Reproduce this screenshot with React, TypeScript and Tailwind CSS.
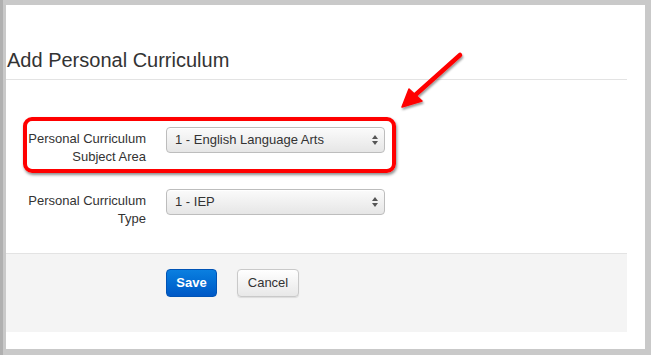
export default function App() {
  const rows = [
    { id: "subject", label: ["Personal Curriculum", "Subject Area"], value: "1 - English Language Arts" },
    { id: "type", label: ["Personal Curriculum", "Type"], value: "1 - IEP" },
  ];

  return (
    <div
      className="relative w-[651px] h-[355px] bg-[#c9c9c9] border-l-[3px] border-[#b0b0b0] pt-[5px] pr-[6px] pb-[6px] pl-[3px] overflow-hidden"
      style={{ fontFamily: '"Liberation Sans", Arial, sans-serif' }}
    >
      <div className="bg-white h-full pr-[18px]">
        <div className="h-[75px] border-b border-[#e3e3e3] flex items-end pb-[6px] pl-[1px]">
          <h1 className="text-[20px] leading-[26px] text-[#333]">Add Personal Curriculum</h1>
        </div>

        <div className="h-[173px] pt-[47px] flex flex-col gap-[23px]">
          {rows.map((row) => (
            <div key={row.id} className="flex items-start">
              <div className="w-[140px] text-right text-[13px] leading-[18px] text-[#333] pt-[3px]">
                {row.label.map((l) => (
                  <div key={l}>{l}</div>
                ))}
              </div>
              <div className="ml-[20px] w-[219px] h-[26px] rounded-[4px] border border-[#bdbdbd] bg-gradient-to-b from-[#fbfbfb] to-[#e6e6e6] flex items-center justify-between pl-[8px] pr-[5px] shadow-[inset_0_1px_0_#fff]">
                <span className="text-[13px] text-[#333]">{row.value}</span>
                <svg width="8" height="12" viewBox="0 0 8 12">
                  <path d="M4 1 L7 5 L1 5 Z" fill="#555" />
                  <path d="M4 11 L7 7 L1 7 Z" fill="#555" />
                </svg>
              </div>
            </div>
          ))}
        </div>

        <div className="h-[79px] bg-[#f4f4f4] border-t border-[#e3e3e3] flex items-start pt-[15px] pl-[160px] gap-[20px]">
          <button className="w-[51px] h-[28px] rounded-[4px] bg-gradient-to-b from-[#0b7fe0] to-[#0058c6] border border-[#0053b5] text-white font-bold text-[13px]">
            Save
          </button>
          <button className="w-[62px] h-[28px] rounded-[4px] bg-gradient-to-b from-white to-[#e8e8e8] border border-[#c9c9c9] text-[#333] text-[13px] shadow-[0_1px_1px_rgba(0,0,0,0.1)]">
            Cancel
          </button>
        </div>
      </div>

      <div className="absolute left-[20px] top-[117px] w-[373px] h-[56px] rounded-[9px] border-[4px] border-[#ff0000] shadow-[1px_2px_3px_rgba(0,0,0,0.45)]" />

      <svg className="absolute left-[390px] top-[45px]" width="80" height="75" viewBox="0 0 80 75">
        <defs>
          <filter id="sh" x="-20%" y="-20%" width="150%" height="150%">
            <feDropShadow dx="1" dy="2" stdDeviation="1.2" floodColor="#000" floodOpacity="0.4" />
          </filter>
        </defs>
        <g filter="url(#sh)">
          <line x1="67" y1="10" x2="20" y2="52" stroke="#ff0000" strokeWidth="4.5" strokeLinecap="round" />
          <path d="M9 62 L16 44 L29 56 Z" fill="#ff0000" stroke="#ff0000" strokeWidth="1.5" strokeLinejoin="round" />
        </g>
      </svg>
    </div>
  );
}
